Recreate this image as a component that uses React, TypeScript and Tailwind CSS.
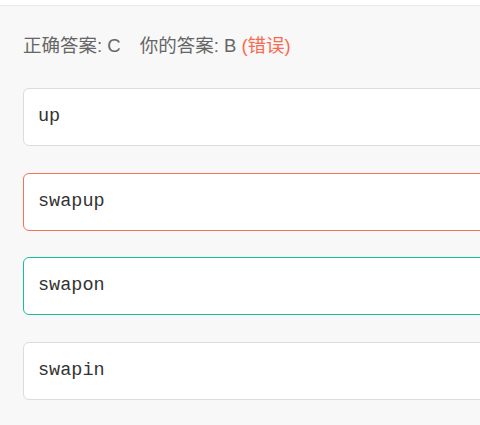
const options = [
  { text: "up", border: "border-[#dcdcdc]", gap: "mt-0" },
  { text: "swapup", border: "border-[#f0735a]", gap: "mt-[27px]" },
  { text: "swapon", border: "border-[#1abc9c]", gap: "mt-[26px]" },
  { text: "swapin", border: "border-[#dcdcdc]", gap: "mt-[27px]" },
];

export default function App() {
  return (
    <div className="w-[480px] h-[425px] overflow-hidden bg-[#f8f8f8]">
      <div className="h-[6px] bg-white border-b border-[#e8e8e8]" />
      <div className="pl-[23px]">
        {/* result line */}
        <p
          className="mt-[26px] text-[18.5px] leading-[27px] text-[#666] whitespace-pre"
          style={{ fontFamily: '"Liberation Sans", "Noto Sans CJK SC", sans-serif' }}
        >
          <span className="mr-[19px]">正确答案: C</span>
          你的答案: B <span className="text-[#f96a4e]">(错误)</span>
        </p>

        {/* options */}
        <div className="mt-[29px] flex flex-col">
          {options.map((o) => (
            <div
              key={o.text}
              className={`w-[480px] h-[58px] flex items-center pl-[14px] bg-white border rounded-[6px] ${o.border} ${o.gap}`}
            >
              <span
                className="text-[18.5px] text-[#333]"
                style={{ fontFamily: '"Liberation Mono", "Courier New", monospace' }}
              >
                {o.text}
              </span>
            </div>
          ))}
        </div>
      </div>
    </div>
  );
}
